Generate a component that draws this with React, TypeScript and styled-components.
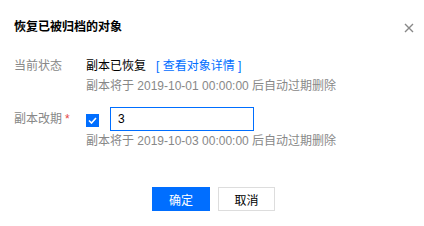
import styled, { createGlobalStyle } from "styled-components";

const GlobalStyle = createGlobalStyle`
  html, body {
    margin: 0;
    padding: 0;
    background: #fff;
  }
  body {
    font-family: "Liberation Sans", "Noto Sans CJK SC", sans-serif;
    font-size: 12px;
    color: #000;
  }
`;

const App = () => {
  return (
    <>
      <GlobalStyle />
      <Dialog>
        <Header>
          <Title>恢复已被归档的对象</Title>
          <Close aria-label="关闭">
            <svg width="10" height="10" viewBox="0 0 10 10">
              <path
                d="M1 1 L9 9 M9 1 L1 9"
                stroke="#888"
                strokeWidth="1.4"
                fill="none"
              />
            </svg>
          </Close>
        </Header>
        <Body>
          <Row>
            <Label>当前状态</Label>
            <Field>
              <Line>
                副本已恢复
                <Link href="#">[ 查看对象详情 ]</Link>
              </Line>
              <Hint>副本将于 2019-10-01 00:00:00 后自动过期删除</Hint>
            </Field>
          </Row>
          <Row spaced>
            <Label tall>
              副本改期<Required>*</Required>
            </Label>
            <Field>
              <Controls>
                <Checkbox>
                  <svg width="9" height="7" viewBox="0 0 9 7">
                    <path
                      d="M1 3.5 L3.5 6 L8 1"
                      stroke="#fff"
                      strokeWidth="1.6"
                      fill="none"
                    />
                  </svg>
                </Checkbox>
                <Input defaultValue="3" />
              </Controls>
              <Hint>副本将于 2019-10-03 00:00:00 后自动过期删除</Hint>
            </Field>
          </Row>
        </Body>
        <Footer>
          <Button primary>确定</Button>
          <Button>取消</Button>
        </Footer>
      </Dialog>
    </>
  );
};

const Dialog = styled.div`
  width: 424px;
  height: 226px;
  background: #fff;
  box-sizing: border-box;
  padding-top: 17px;
`;

const Header = styled.div`
  display: flex;
  justify-content: space-between;
  align-items: center;
  height: 20px;
  padding: 0 10px 0 14px;
`;

const Title = styled.h3`
  margin: 0;
  font-size: 12px;
  line-height: 20px;
  font-weight: 700;
  color: #000;
`;

const Close = styled.span`
  display: flex;
  width: 10px;
  height: 10px;
  margin-top: 2px;
`;

const Body = styled.div`
  padding: 19px 14px 0 14px;
`;

const Row = styled.div<{ spaced?: boolean }>`
  display: flex;
  margin-top: ${({ spaced }) => (spaced ? "11px" : "0")};
`;

const Label = styled.div<{ tall?: boolean }>`
  width: 72px;
  flex-shrink: 0;
  color: #888;
  line-height: ${({ tall }) => (tall ? "24px" : "20px")};
`;

const Required = styled.span`
  color: #e54545;
  margin-left: 3px;
`;

const Field = styled.div`
  display: flex;
  flex-direction: column;
`;

const Line = styled.div`
  line-height: 20px;
  color: #000;
`;

const Link = styled.a`
  color: #006eff;
  text-decoration: none;
  margin-left: 10px;
`;

const Hint = styled.div`
  line-height: 20px;
  color: #888;
`;

const Controls = styled.div`
  display: flex;
  align-items: center;
  height: 24px;
`;

const Checkbox = styled.span`
  width: 13px;
  height: 13px;
  background: #006eff;
  display: flex;
  align-items: center;
  justify-content: center;
  margin-top: 2px;
  margin-right: 11px;
`;

const Input = styled.input`
  width: 144px;
  height: 24px;
  box-sizing: border-box;
  border: 1px solid #006eff;
  outline: none;
  padding: 0 7px;
  font-family: "Liberation Sans", "Noto Sans CJK SC", sans-serif;
  font-size: 12px;
  color: #000;
`;

const Footer = styled.div`
  display: flex;
  justify-content: center;
  gap: 8px;
  margin-top: 36px;
  padding-left: 3px;
`;

const Button = styled.button<{ primary?: boolean }>`
  height: 24px;
  width: ${({ primary }) => (primary ? "58px" : "57px")};
  box-sizing: border-box;
  border: 1px solid ${({ primary }) => (primary ? "#006eff" : "#ddd")};
  background: ${({ primary }) => (primary ? "#006eff" : "#fff")};
  color: ${({ primary }) => (primary ? "#fff" : "#000")};
  font-family: "Liberation Sans", "Noto Sans CJK SC", sans-serif;
  font-size: 12px;
  padding: 0;
  cursor: pointer;
`;

export default App;
